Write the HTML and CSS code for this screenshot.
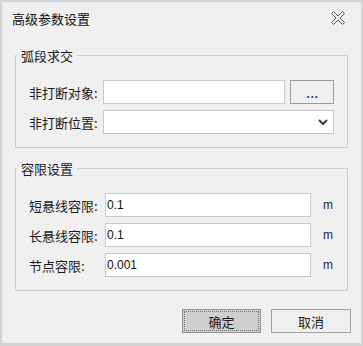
FILE: index.html
```html
<!DOCTYPE html>
<html lang="zh-CN">
<head>
<meta charset="utf-8">
<title>高级参数设置</title>
<link rel="stylesheet" href="styles.css">
</head>
<body>
<div class="window">
  <header class="titlebar">
    <span class="title">高级参数设置</span>
    <svg class="close" width="16" height="16" viewBox="0 0 16 16" aria-label="关闭">
      <polygon points="1.5,3.5 3.5,1.5 8,6 12.5,1.5 14.5,3.5 10,8 14.5,12.5 12.5,14.5 8,10 3.5,14.5 1.5,12.5 6,8" fill="none" stroke="#555" stroke-width="1"/>
    </svg>
  </header>

  <fieldset class="group group-first">
    <legend>弧段求交</legend>
    <div class="group-body">
      <div class="row">
        <label class="lbl lbl-a">非打断对象:</label>
        <input class="field field-obj" type="text" value="">
        <button class="browse" type="button">...</button>
      </div>
      <div class="row">
        <label class="lbl lbl-a">非打断位置:</label>
        <div class="select">
          <svg width="10" height="7" viewBox="0 0 10 7"><polyline points="1,1 5,5 9,1" fill="none" stroke="#3c3c3c" stroke-width="2"/></svg>
        </div>
      </div>
    </div>
  </fieldset>

  <fieldset class="group group-second">
    <legend>容限设置</legend>
    <div class="group-body">
      <div class="row">
        <label class="lbl lbl-b">短悬线容限:</label>
        <input class="field field-tol" type="text" value="0.1">
        <span class="unit">m</span>
      </div>
      <div class="row">
        <label class="lbl lbl-b">长悬线容限:</label>
        <input class="field field-tol" type="text" value="0.1">
        <span class="unit">m</span>
      </div>
      <div class="row">
        <label class="lbl lbl-b">节点容限:</label>
        <input class="field field-tol" type="text" value="0.001">
        <span class="unit">m</span>
      </div>
    </div>
  </fieldset>

  <div class="actions">
    <button class="btn btn-default" type="button">确定</button>
    <button class="btn" type="button">取消</button>
  </div>
</div>
</body>
</html>
```

FILE: styles.css
```css
* { box-sizing: border-box; }

html, body {
  margin: 0;
  padding: 0;
  background: #f0f0f0;
}

body {
  font-family: "Noto Sans CJK SC", "Noto Sans", sans-serif;
  font-size: 13px;
  color: #1a1a1a;
}

.window {
  width: 363px;
  height: 346px;
  border-style: solid;
  border-color: #d4d4d4;
  border-width: 2px 2px 3px 2px;
  background: #f0f0f0;
  display: flex;
  flex-direction: column;
}

.titlebar {
  height: 45px;
  padding: 8px 15px 0 10px;
  display: flex;
  align-items: flex-start;
}

.title {
  line-height: 17px;
  font-size: 13px;
  color: #111;
}

.close {
  margin-left: auto;
  display: block;
}

.group {
  margin: 0 0 0 13px;
  width: 333px;
  padding: 0;
  border: 1px solid #cdcdcd;
  min-inline-size: 0;
}

.group legend {
  margin-left: 1px;
  padding: 0 4px;
  line-height: 17px;
  font-size: 13px;
  color: #1a1a1a;
}

.group-second {
  margin-top: 12px;
}

.group-body {
  padding: 16px 0 13px 13px;
  display: flex;
  flex-direction: column;
  gap: 6px;
}

.row {
  display: flex;
  align-items: center;
  height: 24px;
}

.lbl {
  font-size: 13px;
  line-height: 17px;
  color: #1a1a1a;
  white-space: nowrap;
}

.lbl-a { width: 74px; }
.lbl-b { width: 76px; }

.field {
  height: 24px;
  margin: 0;
  border: 1px solid #cacaca;
  background: #fff;
  padding: 0 0 0 1px;
  font-family: "Liberation Sans", Arial, sans-serif;
  font-size: 12px;
  color: #111;
  outline: none;
}

.field-obj { width: 182px; }
.field-tol { width: 206px; }

.browse {
  margin: 0 0 0 5px;
  width: 44px;
  height: 24px;
  border: 1px solid #999;
  background: #f0f0f0;
  padding: 2px 0 0 1px;
  font-family: "Liberation Sans", Arial, sans-serif;
  font-size: 13px;
  font-weight: bold;
  color: #2b4f80;
  letter-spacing: 0.5px;
}

.select {
  width: 231px;
  height: 24px;
  border: 1px solid #cacaca;
  background: #fff;
  display: flex;
  align-items: center;
  justify-content: flex-end;
  padding-right: 5px;
}

.select svg { display: block; }

.unit {
  margin-left: 12px;
  font-family: "Liberation Sans", Arial, sans-serif;
  font-size: 12px;
  color: #2a2233;
}

.actions {
  margin-top: 18px;
  padding-left: 180px;
  display: flex;
  gap: 10px;
}

.btn {
  margin: 0;
  width: 80px;
  height: 24px;
  border: 1px solid #a0a0a0;
  background: #efefef;
  padding: 0;
  font-family: "Noto Sans CJK SC", sans-serif;
  font-size: 13px;
  color: #1a1a1a;
}

.btn-default {
  width: 79px;
  background: #cfcfcf;
  border-color: #959595;
  outline: 1px dotted #6e6e6e;
  outline-offset: -3px;
}
```
